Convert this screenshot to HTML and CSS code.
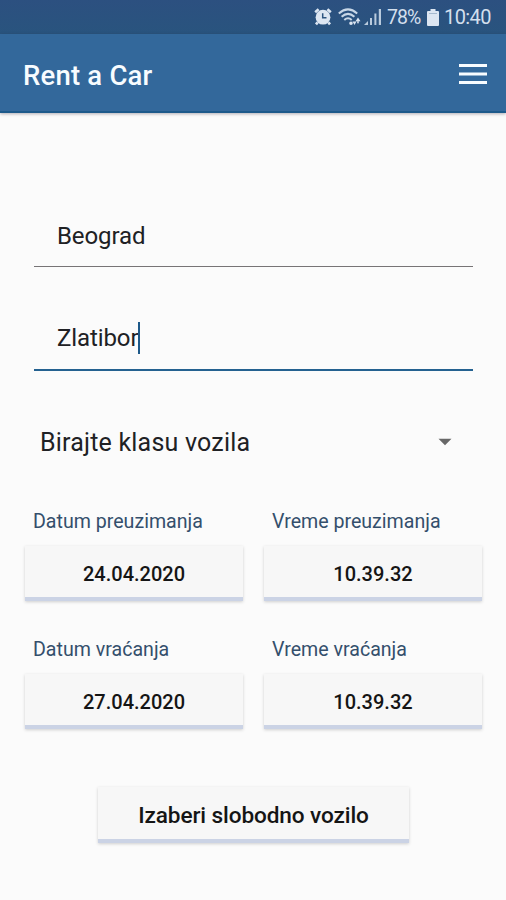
FILE: index.html
```html
<!DOCTYPE html>
<html lang="sr">
<head>
<meta charset="utf-8">
<title>Rent a Car</title>
<link rel="stylesheet" href="styles.css">
</head>
<body>
<div class="status">
  <svg class="alarm" width="18" height="18" viewBox="0 0 18 18"><circle cx="9" cy="9.2" r="7.4" fill="#dce6f2"/><path d="M1.2 4.2 4.6 1.2M13.4 1.2l3.4 3M3.6 14.4 2 16.4M14.4 14.4l1.6 2" stroke="#dce6f2" stroke-width="2.6"/><path d="M8.7 5.3v4.4h3.8" fill="none" stroke="#2c5480" stroke-width="1.5"/></svg>
  <svg class="wifi" width="24" height="18" viewBox="0 0 24 18"><g fill="none" stroke="#c8d7e7" stroke-width="2"><path d="M.8 5.4Q10-2.6 19.2 5.4"/><path d="M3.6 8.8Q10 3 16.4 8.8"/><path d="M6.3 12Q10 8.6 13.7 12"/></g><path d="M11.2 15.2a1.8 1.8 0 1 0 3.6 0 1.8 1.8 0 1 0-3.6 0zM14.5 13.5h4L16.5 17zM17.5 13.2h5L20 9.5zM18.5 13h3L20 16z" fill="#dce6f2"/></svg>
  <svg class="signal" width="18" height="18" viewBox="0 0 18 18"><path d="M0 17l4-4v4zM6 10h2v7H6zM10.4 5.5h2V17h-2zM14.8 1h2.2v16h-2.2z" fill="#b9cbdd"/></svg>
  <span class="percent">78%</span>
  <svg class="battery" width="12" height="17" viewBox="0 0 12 17"><path d="M3.5 0h5v2H11q1 0 1 1v13q0 1-1 1H1q-1 0-1-1V3q0-1 1-1h2.5z" fill="#dce6f2"/><path d="M2 4.5h8" stroke="#a5b9cf"/></svg>
  <span class="clock">10:40</span>
</div>
<header class="appbar">
  <h1>Rent a Car</h1>
  <svg width="30" height="22" viewBox="0 0 30 22"><path d="M1 2.5h28M1 11h28M1 19.5h28" stroke="#f8fcff" stroke-width="3"/></svg>
</header>
<main>
  <div class="field"><span class="city">Beograd</span></div>
  <div class="field active"><span class="city">Zlatibor</span><i class="caret"></i></div>
  <div class="select"><span class="choice">Birajte klasu vozila</span><svg width="14" height="8" viewBox="0 0 14 8"><path d="M.5.8h13L7 7.2z" fill="#686868"/></svg></div>
  <div class="grid">
    <div class="cell"><span class="label">Datum preuzimanja</span><div class="button">24.04.2020</div></div>
    <div class="cell"><span class="label">Vreme preuzimanja</span><div class="button">10.39.32</div></div>
    <div class="cell"><span class="label">Datum vraćanja</span><div class="button">27.04.2020</div></div>
    <div class="cell"><span class="label">Vreme vraćanja</span><div class="button">10.39.32</div></div>
  </div>
  <div class="button submit">Izaberi slobodno vozilo</div>
</main>
</body>
</html>
```
FILE: styles.css
```css
* { box-sizing: border-box; }
body {
  margin: 0;
  height: 900px;
  overflow: hidden;
  background: #fbfbfb;
  color: #202124;
  font-family: Roboto, sans-serif;
}
svg { display: block; flex: none; }
span, h1 { white-space: nowrap; }
.status {
  height: 34px;
  display: flex;
  align-items: center;
  padding-left: 314px;
  background: linear-gradient(#2c5080, #29547e);
  color: #d3dfed;
  font-size: 20px;
  letter-spacing: -.6px;
}
.wifi { margin-left: 6px; }
.signal { margin-left: 2px; }
.percent { width: 34px; margin-left: 5px; font-size: 19.5px; letter-spacing: -1px; }
.battery { margin-left: 6px; }
.clock { margin-left: 5px; }
.appbar {
  height: 79px;
  display: flex;
  align-items: center;
  justify-content: space-between;
  padding: 2px 18px 0 23px;
  background: #33689b;
  border-bottom: 2px solid #1d5a8b;
  box-shadow: 0 1px 3px rgba(40, 30, 50, .35);
}
h1 {
  margin: 0;
  padding-top: 3px;
  color: #f8fcff;
  font-size: 27.5px;
  font-weight: 500;
  letter-spacing: .2px;
}
main { padding: 89px 22px 0; }
.field {
  height: 65px;
  margin: 0 11px 0 12px;
  padding: 3px 0 0 23px;
  display: flex;
  align-items: center;
  border-bottom: 1px solid #777476;
  font-size: 24px;
  letter-spacing: -.1px;
}
.field.active {
  height: 67px;
  margin-top: 37px;
  padding-top: 2px;
  border-bottom: 2px solid #246190;
}
.caret { width: 2px; height: 32px; background: #1d5989; }
.select {
  height: 42px;
  margin-top: 50px;
  padding: 0 32px 0 18px;
  display: flex;
  align-items: center;
  justify-content: space-between;
  font-size: 25px;
}
.choice { letter-spacing: .2px; }
.grid {
  margin: 46px 1px 0 3px;
  display: grid;
  grid-template-columns: 218px 218px;
  column-gap: 21px;
  row-gap: 36px;
}
.label {
  display: block;
  height: 24px;
  margin: 0 0 13px 8px;
  color: #344f6c;
  font-size: 19.6px;
  line-height: 26px;
}
.button {
  height: 55px;
  padding-top: 4px;
  display: flex;
  align-items: center;
  justify-content: center;
  background: #f7f7f7;
  border-bottom: 4px solid #cbd3e5;
  box-shadow: 0 1px 3px rgba(0, 0, 0, .18);
  color: #151515;
  font-size: 20px;
  font-weight: 500;
}
.submit {
  width: 311px;
  height: 56px;
  margin: 58px auto 0 76px;
  padding-top: 4px;
  font-size: 22.6px;
  letter-spacing: -.1px;
}
```
